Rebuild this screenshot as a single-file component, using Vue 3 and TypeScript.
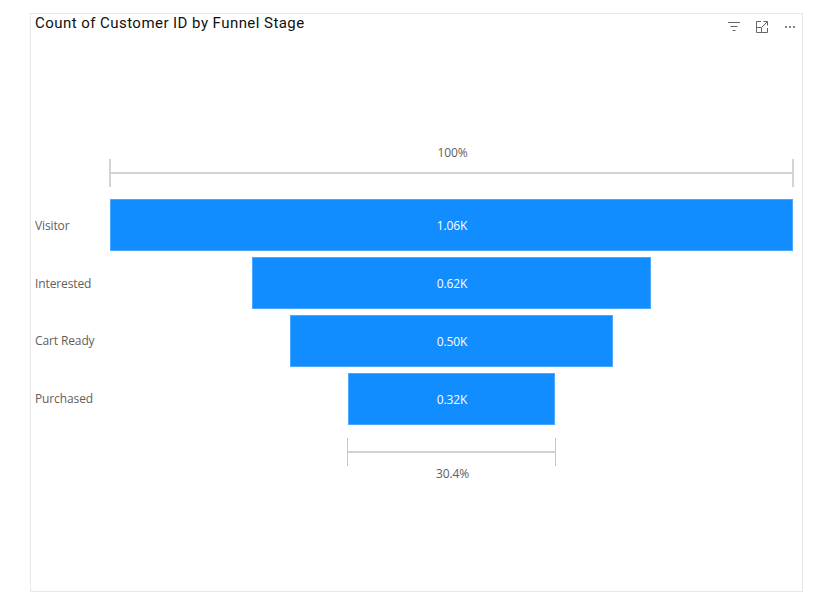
<script setup lang="ts">
interface Stage { label: string; value: string; width: number }
const stages: Stage[] = [
  { label: 'Visitor', value: '1.06K', width: 683 },
  { label: 'Interested', value: '0.62K', width: 399 },
  { label: 'Cart Ready', value: '0.50K', width: 323 },
  { label: 'Purchased', value: '0.32K', width: 207 },
]
</script>

<template>
  <div class="page">
    <section class="card">
      <header class="head">
        <h1 class="title">Count of Customer ID by Funnel Stage</h1>
        <div class="tools">
          <svg width="14" height="12" viewBox="0 0 14 12" fill="none" stroke="#666" stroke-width="1">
            <path d="M1 1.5h12M3.5 5.5h7M5.500 9.500h3" />
          </svg>
          <svg width="14" height="14" viewBox="0 0 14 14" fill="none" stroke="#666" stroke-width="1">
            <path d="M6 1.500H1.500v11h11V8M8.500 1.500h4v4M12.500 1.500L7 7M1.500 7.500h5v5" />
          </svg>
          <svg class="more" width="12" height="4" viewBox="0 0 12 4" fill="#666">
            <circle cx="2" cy="2" r="1.100" />
            <circle cx="6" cy="2" r="1.100" />
            <circle cx="10" cy="2" r="1.100" />
          </svg>
        </div>
      </header>
      <div class="chart">
        <div class="plot-row top-note">
          <div class="note">100%</div>
          <div class="bracket full"></div>
        </div>
        <div class="stages">
          <div v-for="s in stages" :key="s.label" class="stage">
            <div class="label">{{ s.label }}</div>
            <div class="lane">
              <div class="bar" :style="{ width: s.width + 'px' }">{{ s.value }}</div>
            </div>
          </div>
        </div>
        <div class="plot-row bottom-note">
          <div class="bracket part"></div>
          <div class="note">30.4%</div>
        </div>
      </div>
    </section>
  </div>
</template>

<style>
html, body { margin: 0; background: #fff; }
</style>

<style scoped>
.page {
  width: 832px;
  height: 603px;
  box-sizing: border-box;
  padding: 13px 29px 11px 30px;
  background: #fff;
  overflow: hidden;
}
.card {
  width: 773px;
  height: 579px;
  box-sizing: border-box;
  border: 1px solid #e8e8e8;
  padding: 0 9px 0 4px;
  display: flex;
  flex-direction: column;
}
.head {
  height: 50px;
  flex: none;
  display: flex;
  justify-content: space-between;
  align-items: flex-start;
}
.title {
  margin: 0;
  font: 400 15px/18px Roboto, "Liberation Sans", sans-serif;
  letter-spacing: 0.45px;
  color: #111;
}
.tools {
  display: flex;
  align-items: center;
  gap: 14px;
  margin-top: 5px;
  margin-right: -3px;
  height: 16px;
}
.more { margin-left: 1px; }
.chart {
  display: flex;
  flex-direction: column;
  font: 400 12px/16px "Open Sans", "Noto Sans", sans-serif;
  letter-spacing: -0.12px;
  color: #605e5c;
}
.plot-row {
  margin-left: 75px;
  width: 683px;
  display: flex;
  flex-direction: column;
  align-items: center;
}
.top-note { margin-top: 81px; }
.note { height: 16px; text-align: center; position: relative; left: 1px; }
.bracket {
  height: 28px;
  box-sizing: border-box;
  border-left: 1px solid #c8c8c8;
  border-right: 1px solid #c8c8c8;
  background: linear-gradient(#d2d2d2, #d2d2d2) center / 100% 2px no-repeat;
}
.full {
  width: 685px;
  margin-top: -2px;
  border-left-width: 2px;
  border-right-width: 2px;
  border-color: #d4d4d4;
}
.part { width: 209px; }
.stages {
  display: flex;
  flex-direction: column;
  gap: 6px;
  margin-top: 12px;
}
.stage {
  display: flex;
  height: 52px;
  align-items: center;
}
.stage:nth-child(-n+2) .label { margin-top: 2px; }
.label { width: 75px; flex: none; }
.lane {
  width: 683px;
  display: flex;
  justify-content: center;
}
.bar {
  height: 52px;
  box-sizing: border-box;
  padding: 1px 0 0 1px;
  background: #118dff;
  border: 1px solid #4aa8ff;
  color: #fff;
  display: flex;
  align-items: center;
  justify-content: center;
}
.bottom-note { margin-top: 13px; }
</style>
